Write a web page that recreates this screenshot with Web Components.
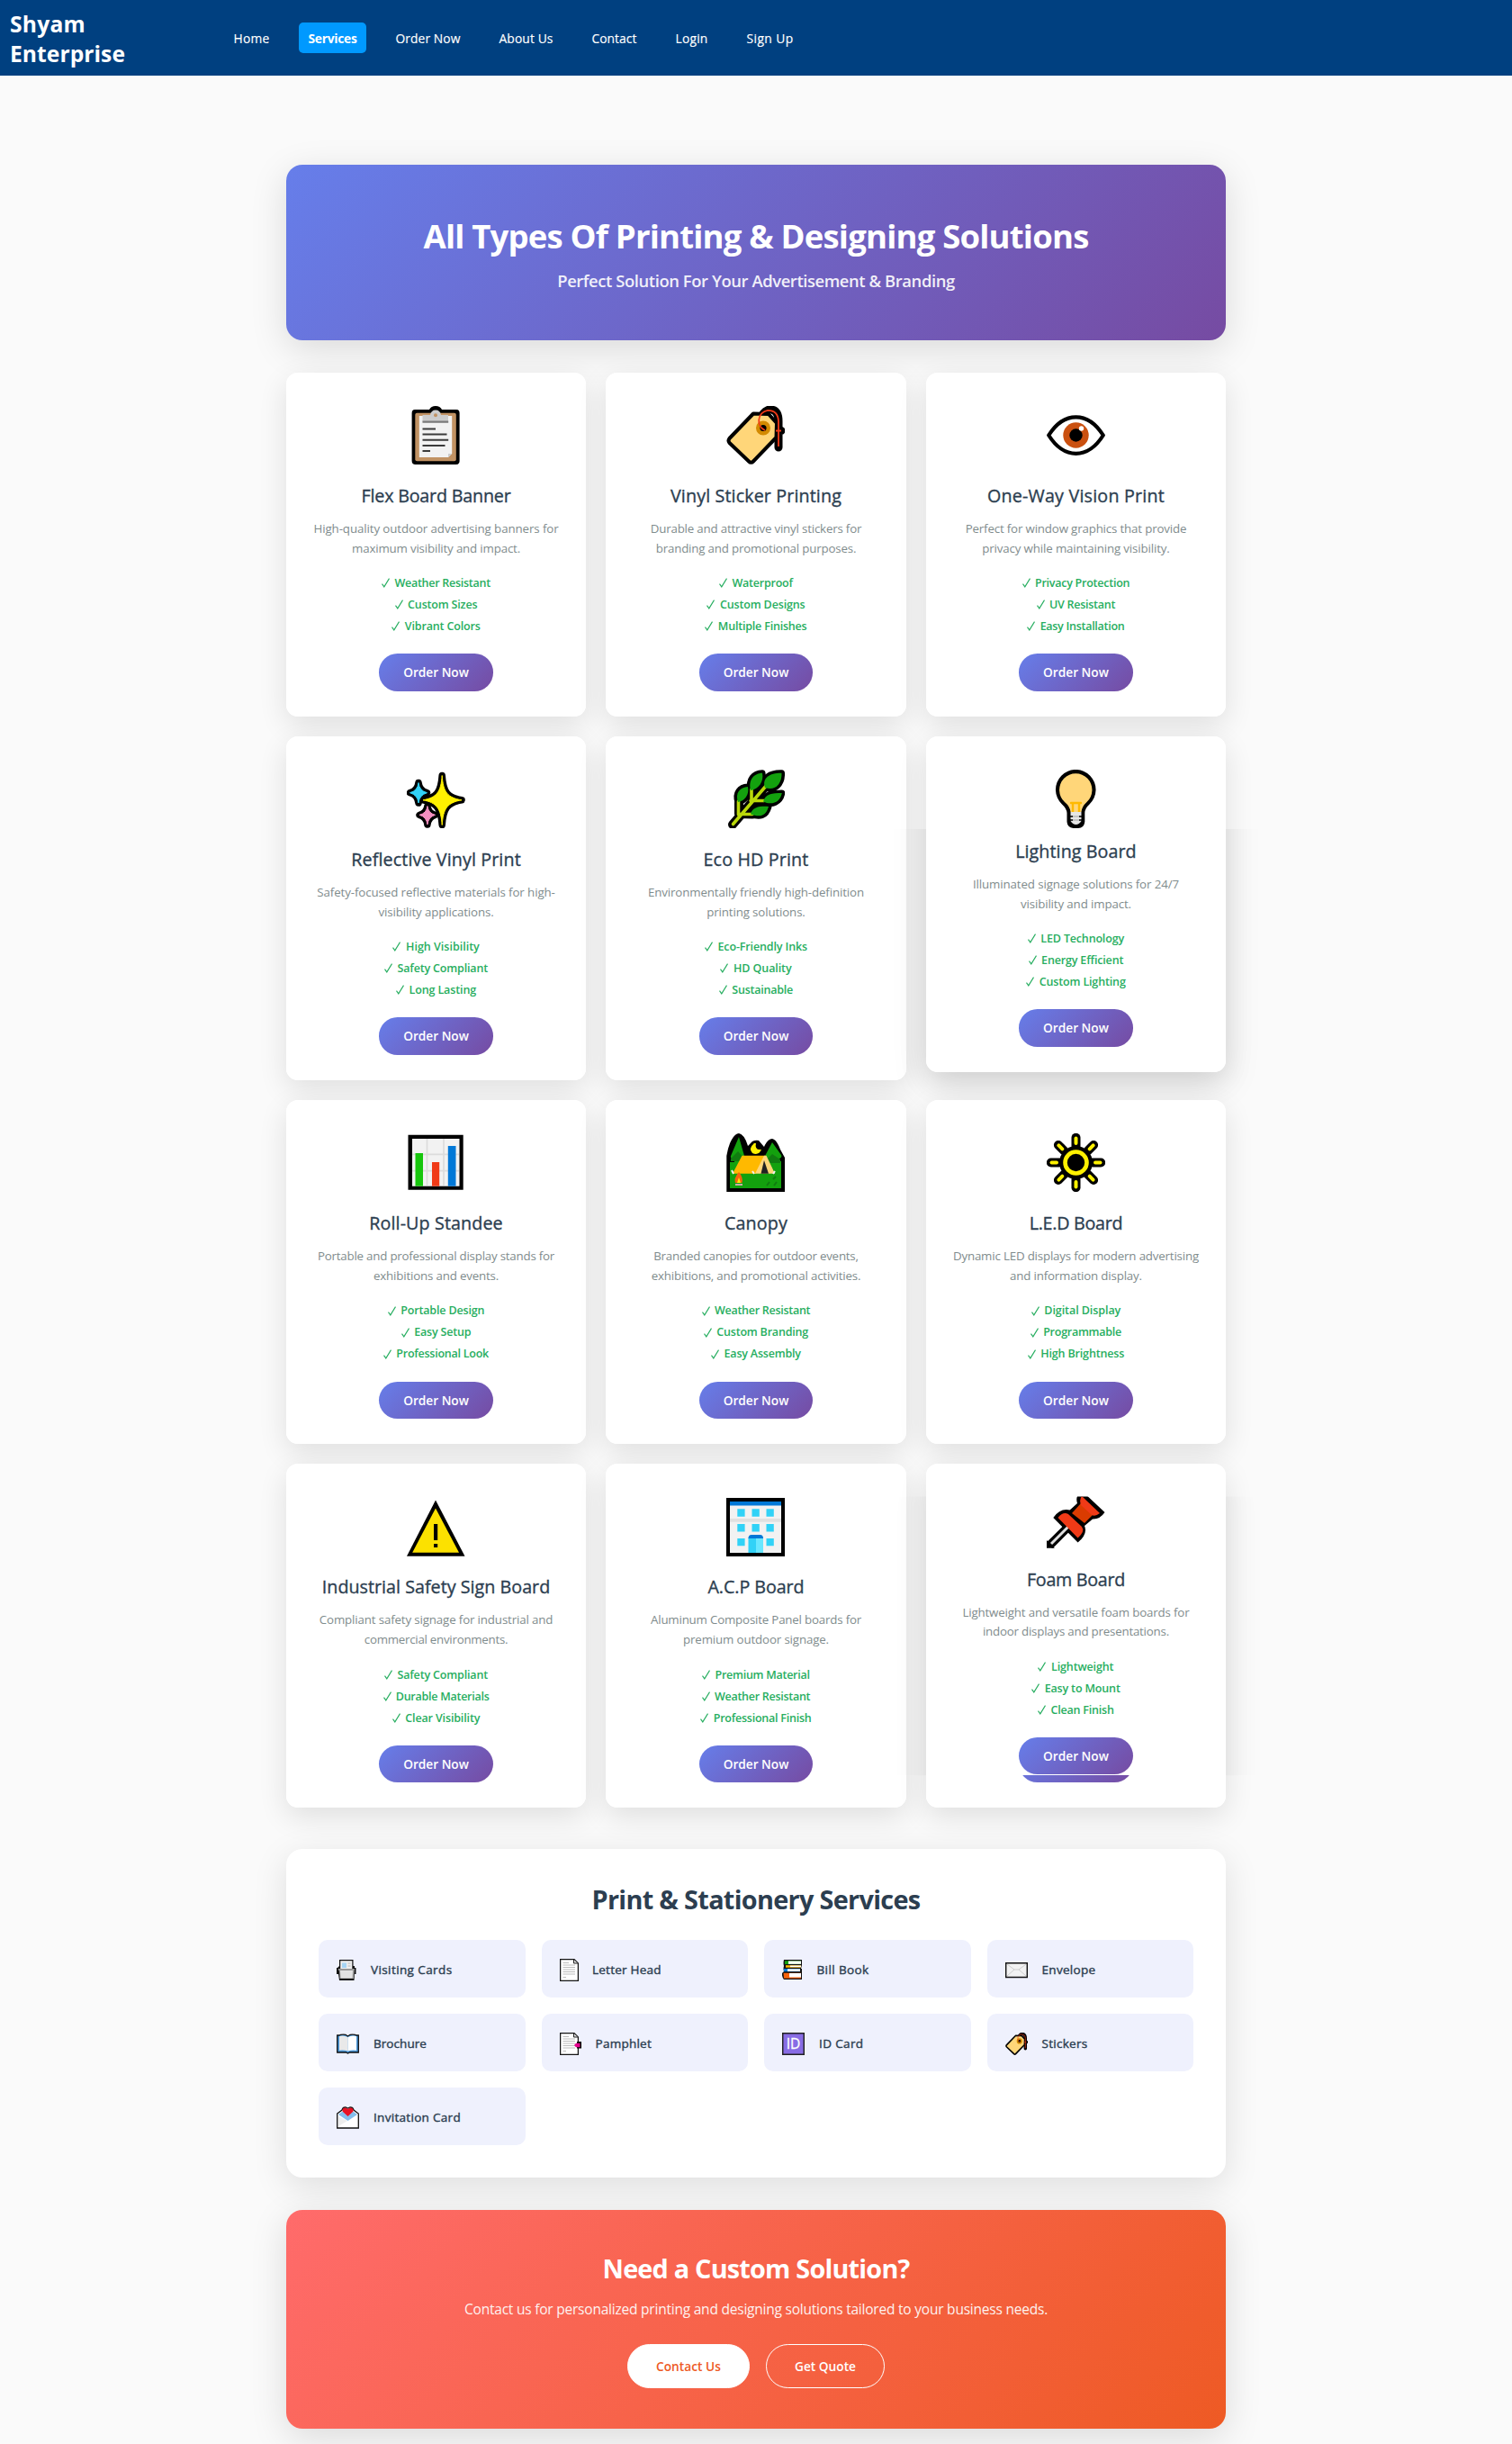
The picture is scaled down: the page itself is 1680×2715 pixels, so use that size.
<!DOCTYPE html>
<html lang="en">
<head>
<meta charset="utf-8">
<title>Shyam Enterprise - Services</title>
<style>
html, body { margin: 0; background: #fafafa; }
body { font-family: "Open Sans", "Noto Sans", sans-serif; width: 1680px; height: 2715px; overflow: hidden; }
main { width: 1044px; margin: 0 auto; padding-top: 99px; }
.cards { display: grid; grid-template-columns: repeat(3, 1fr); gap: 22.4px; margin-top: 35.9px; grid-auto-rows: 381.8px; }
</style>
</head>
<body>
<site-nav>
  <nav-link w="39">Home</nav-link><nav-link w="53" active>Services</nav-link><nav-link w="71">Order Now</nav-link><nav-link w="59">About Us</nav-link><nav-link w="49">Contact</nav-link><nav-link w="35">Login</nav-link><nav-link w="51">Sign Up</nav-link>
</site-nav>
<main>
  <hero-banner></hero-banner>
  <div class="cards" id="cards"></div>
  <stationery-panel></stationery-panel>
  <cta-banner></cta-banner>
</main>
<script>
const ICONS = {
clipboard: `<path d="M9 4H25Q27 0 32 0T39 4H55Q58.600 4 58.600 8V61Q58.600 65 54.600 65H9.600Q5.600 65 5.600 61V8Q5.600 4 9 4Z"/><rect x="9.300" y="7.800" width="45.500" height="53.400" rx="2" fill="#c19263"/><path d="M13.800 11H50.200V53L46 57H13.800Z" fill="#f2f2f2"/><path d="M46 57V53H50.200Z" fill="#ccc"/><path d="M17.500 18.500V10H26Q27 4.500 32 4.500T38 10H46V18.500Z" fill="#ccc"/><rect x="17.500" y="16.500" width="28.700" height="2.200" fill="#7a7a7a"/><circle cx="32" cy="10.200" r="2" fill="#c19263"/><path d="M17.500 25.600H32M17.500 31.600H44.500M17.500 37.700H46.200M17.500 44H42.500M17.500 50H26" stroke="#3b3b3b" stroke-width="2"/>`,
tag: `<path d="M41 24C34 9 46 3 50 4Q58 5 58 17V46M54 27.500H61" fill="none" stroke="#000" stroke-width="9" stroke-linecap="round" stroke-linejoin="round"/><path d="M30 8.500L47 9L56 19L55.500 35L30 61.500Q27.500 64 25 61.500L3.500 41Q1.500 38.500 3.500 36Z" fill="#ffd679" stroke="#000" stroke-width="4" stroke-linejoin="round"/><circle cx="41" cy="24.500" r="5.800" fill="#000" stroke="#d38a00" stroke-width="4.400"/><path d="M43 27C33 23 34 7 46 4.800Q57.500 4.800 58 17V45M55 27.500H61" fill="none" stroke="#f03a17" stroke-width="1.800"/>`,
eye: `<path d="M2.200 32.500Q15 12.300 32.500 12.300T62.800 32.500Q50 52.800 32.500 52.800T2.200 32.500Z" fill="#fff" stroke="#000" stroke-width="4.200" stroke-linejoin="round"/><circle cx="32.500" cy="32.500" r="14.200" fill="#ca5010"/><circle cx="32.500" cy="32.500" r="7.200"/><circle cx="38.500" cy="25" r="2.700" fill="#fff"/>`,
sparkles: `<defs><path id="a" d="M39.200 6.500C40.500 25 45 31 61 33.800C45 36.500 40.500 43 39.200 61.500C38 43 33 36.500 18 33.800C33 31 38 25 39.200 6.500Z"/><path id="b" d="M13 14.500Q14 23.500 22.500 25.700Q14 28 13 37Q12 28 3.500 25.700Q12 23.500 13 14.500Z"/><path id="c" d="M22.900 40.500Q24 48.500 31.500 50.300Q24 52.500 22.900 61Q22 52.500 14 50.300Q22 48.500 22.900 40.500Z"/></defs><g stroke="#000" stroke-width="7.500" stroke-linejoin="round"><use href="#a"/><use href="#b"/><use href="#c"/></g><use href="#a" fill="#fff100" stroke="#fff100" stroke-width="1"/><use href="#b" fill="#31d2f7" stroke="#31d2f7"/><use href="#c" fill="#f48fc0" stroke="#f48fc0"/>`,
leaf: `<defs><g id="l"><path d="M43 20C39 9 49 3.500 61.500 3.800C62 16 54 24 43 20Z"/><path d="M27 23C24 11 31 4 40 3.800C42 13 36 22 27 23Z"/><path d="M13 36C9.500 26 15 19.500 24 19C26 28 20 35 13 36Z"/><path d="M41 35.500C43 27 51 26 61.800 26C60 36 51 40 41 35.500Z"/><path d="M27 49.500C29 41 38 40.500 47 41C44 52 37 53 27 49.500Z"/></g></defs><g stroke="#000" stroke-width="7" stroke-linejoin="round" stroke-linecap="round"><use href="#l"/><path d="M7 61L45 17M28.500 22V34.500M14 37V49L29 49.500M29 34.500H42" fill="none" stroke-width="10"/></g><path d="M7.500 60.500L45 17M28 22V35M13.500 35V50M27 34.500H42M15 49.500H29" fill="none" stroke="#bad80a" stroke-width="3.600" stroke-linecap="round"/><use href="#l" fill="#13a10e"/>`,
bulb: `<path d="M22.500 48Q22 43 17 38.500A22.300 22.300 0 1 1 47.500 38.500Q42.500 43 42.300 48V58Q41.500 65 35 65H29.500Q23 64 22.500 58Z"/><path d="M26.500 47Q26 41 20 36A18.200 18.200 0 1 1 44.500 36Q39 41 38.500 47Z" fill="#ffd679"/><path d="M29 47V37M36 47V37M27 37H38" fill="none" stroke="#ffb900" stroke-width="2.400" stroke-linecap="round"/><path d="M26.500 47H38.500V57Q36 61 32.500 61T26.500 57Z" fill="#e6e6e6"/><path d="M28 52H37M28 56H37" stroke="#bbb" stroke-width="1.500"/><path d="M26 52H29M36 52H39M26 56H29M36 56H39" stroke="#000" stroke-width="1.300"/>`,
chart: `<path d="M1.500 1.700H62.700V62.700H1.500Z"/><path d="M6 6H58.500V58.700H6Z" fill="#f2f2f2"/><path d="M22.500 6V58M41 6V58M6 23.300H58M6 41.700H58" stroke="#dcdcdc" stroke-width="1.700"/><path d="M9.500 22H18V58.700H9.500Z" fill="#16c60c"/><path d="M28 32H36.200V58.700H28Z" fill="#f03a17"/><path d="M45.800 14H54.500V58.700H45.800Z" fill="#0078d7"/>`,
camp: `<path d="M0.300 65V25Q2 14 6 7Q10 0 14 0Q20 1 24 14L27 11Q30 7 36 8L42 15Q46 6 51 6Q56 7 60 18L65 27V65Z"/><path d="M14 4L5 25Q4 28 9 29V32H4V61H61V31H55V29Q63 28 61 24L51 10L42 27L25 29L20 25Z" fill="#13a10e"/><path d="M20 17L24 28H41L44 19Q36 26 30 22Z"/><path d="M5 28L13 20L20 28V31H5ZM44 30L51 23L60 29V33H46Z" fill="#107c10"/><path d="M31 11Q24 17 29 22Q36 25 39 18Q31 19 33 11Z" fill="#fff100"/><path d="M17.500 24.700H43.300L33 44.700H7Z" fill="#ffb900"/><path d="M42 24.700H44.500L54 44.700H32Z" fill="#ffd679"/><path d="M42 30L47 44.700H38.500Z" fill="#222"/><path d="M6 41L8 45M29 42L31 45M52 45L54 42" stroke="#eee" stroke-width="2"/><path d="M14 43Q19 49 17.500 55H10Q8 50 14 43Z" fill="#f7630c"/><path d="M14 49L16 55H12Z" fill="#fff100"/><path d="M10 57H18" stroke="#caa" stroke-width="2"/><path d="M52 51L55 48M45 58L48 54M53 58L56 54" stroke="#107c10" stroke-width="2"/>`,
sun: (() => { let b = '', y = ''; for (let i = 0; i < 8; i++) { b += `<path d="M32.500 4.800V14" transform="rotate(${i * 45} 32.500 32.500)"/>`; y += `<path d="M32.500 5.500V11" transform="rotate(${i * 45} 32.500 32.500)"/>`; } return `<g stroke="#000" stroke-width="10" stroke-linecap="round">${b}</g><circle cx="32.500" cy="32.500" r="18.500"/><g stroke="#fff100" stroke-width="4" stroke-linecap="round">${y}</g><circle cx="32.500" cy="32.500" r="12" fill="#000" stroke="#fff100" stroke-width="4.600"/>`; })(),
warning: `<path d="M32 2.500L64.500 64.700H0Z"/><path d="M32 11.500L58 60.800H6.200Z" fill="#fce100"/><path d="M30 29H34.200V47H30ZM30 51H34.200V55H30Z"/>`,
building: `<path d="M0 0H65V65H0Z"/><path d="M4 4H61V61H4Z" fill="#f2f2f2"/><path d="M4 4H61V8.500H4Z" fill="#0078d7"/><path d="M4 23H61V26.800H4Z" fill="#e0e0e0"/><path d="M12.300 12.300h8.300v8.400h-8.300ZM28.500 12.300h8.300v8.400h-8.300ZM44.500 12.300h8.300v8.400h-8.300ZM12.300 29h8.300v8.400h-8.300ZM28.500 29h8.300v8.400h-8.300ZM44.500 29h8.300v8.400h-8.300ZM12.300 45h8.300v8.200h-8.300ZM44.500 45h8.300v8.200h-8.300ZM24.500 44H33V61H24.500Z" fill="#31d2f7"/><path d="M33 44H41V61H33Z" fill="#6ae7ff"/><path d="M24.500 45Q24.500 41 28 41H37.500Q41 41 41 45Z" fill="#0078d7"/>`,
pin: `<path d="M23 42L3 62" stroke="#000" stroke-width="9.500" stroke-linecap="butt"/><path d="M0 56L9 65H0Z"/><path d="M34 15Q31 6 40 2L64.500 25Q59 33 51 32.500L42 40Q46 49 34.600 58.600L7.300 31Q15 20 25.700 22.500Z"/><path d="M25 40L5 60" stroke="#e0e0e0" stroke-width="3"/><path d="M28 26L38 15L51 28L42 37Z" fill="#da3b01"/><path d="M12.500 31Q18 24 24 27L39 41Q43 46 34.600 53.500Z" fill="#f03a17"/><path d="M39 7L59 26Q54 30 50 28L38 17Q36 11 39 7Z" fill="#f03a17"/>`,
cardindex: `<path d="M3 1H18.500V8H20V10H21.500V17H20L19.500 24H3L2 17H0V10H1L3 8Z" fill="#111"/><path d="M4.200 2.200H17.300V11H4.200Z" fill="#eee"/><path d="M6 4.500H11V10H6Z" fill="#a6d5f5"/><path d="M12.500 5H15.500M12.500 8H15.500" stroke="#ccc" stroke-width="1.500"/><path d="M1.500 11H20L19 22H3.500L3 14Z" fill="#999"/><path d="M4 13H18L17.500 21.500H4.500Z" fill="#e3e3e3"/>`,
page: `<path d="M.6.600H16L20.400 5V24.400H.6Z" fill="#fff" stroke="#161616" stroke-width="1.300"/><path d="M15.500 1V5H20" fill="#ddd" stroke="#222"/><path d="M3.500 4.500H10M3.500 7H17M3.500 9.500H17M3.500 12H17M3.500 14.500H17M3.500 17H17M3.500 20.500H7" stroke="#b5b5b5" stroke-width=".9"/>`,
books: `<path d="M2 1H22V7L21 11H22V23H2Q-.5 20 0 16L2 14Q1 11 2 8Q1 5 2 1Z" fill="#111"/><path d="M3 2.300H21V6H3Z" fill="#13a10e"/><path d="M7 2.500H21V5.800H7Z" fill="#fff"/><path d="M4 7.200H21V9.700H4Z" fill="#ffb900"/><path d="M9 7.500H21V9.200H9Z" fill="#fff"/><path d="M2 11H20V14.200H2Z" fill="#0078d7"/><path d="M6 11.200H20V14H6Z" fill="#e8f3ff"/><path d="M1.500 15.800H21V21.700H2Z" fill="#f7630c"/><path d="M8 16H21V20.500H8Z" fill="#fff"/>`,
envelope: `<path d="M.7 4.700H24.300V20.500H.7Z" fill="#f2f2f2" stroke="#111" stroke-width="1.400"/><path d="M2 6L10 12H15L23 6M2 19L10 12M15 12L23 19" fill="none" stroke="#c9c9c9" stroke-width=".9"/>`,
book: `<path d="M.7 3H3Q4 2 10 2.300L12.500 4L15 2.300Q21 2 22 3H24.300V22H14.500L12.500 23L10.500 22H.7Z" fill="#4a97d8" stroke="#111" stroke-width="1.300"/><path d="M3 4Q8 2.500 12.500 5V20.500Q8 19 3 19.800Z" fill="#e9e9e9"/><path d="M12.500 5Q17 2.500 22 4V19.800Q17 19 12.500 20.500Z" fill="#fff"/>`,
bookmark: `<path d="M.6.600H16L20.400 5V24.400H.6Z" fill="#fff" stroke="#161616" stroke-width="1.300"/><path d="M15.500 1V5H20" fill="#ddd" stroke="#222"/><path d="M3.500 4.500H10M3.500 7H17M3.500 9.500H17M3.500 12H17M3.500 14.500H17M3.500 17H17M3.500 20.500H7" stroke="#b5b5b5" stroke-width=".9"/><path d="M19 10H24V17.500H19Z"/><path d="M16 14L18 11.700H22.500V16.200H18Z" fill="#e3008c"/>`,
id: `<path d="M.7.700H24.300V24.300H.7Z" fill="#886ce4" stroke="#222" stroke-width="1.500"/><text x="12.500" y="18" text-anchor="middle" font-size="15.500" font-weight="400" fill="#fff" stroke="#fff" stroke-width=".3" font-family="Open Sans">ID</text>`,
letter: `<path d="M.7 8L6 4Q7 .7 10 1L12.500 2L15 1Q18 .7 19 4L24.300 8V24H.7Z" fill="#fff" stroke="#111" stroke-width="1.300"/><path d="M2 9L6 6H19L23 9L12.500 16Z" fill="#83beec"/><path d="M2 11L12 16L2 22Z" fill="#eee"/><path d="M12.500 11L6.500 5.500Q6 1.500 9.500 1.500Q11.500 1.500 12.500 3Q13.500 1.500 15.500 1.500Q19 1.500 18.500 5.500Z" fill="#e81123"/>`
};

/* Inline text whose tracking is adjusted to a given measure in pixels. */
class FitText extends HTMLElement {
  constructor() { super(); this.attachShadow({ mode: 'open' }).innerHTML = `<style>:host{display:inline-block;white-space:pre}</style><slot></slot>`; }
  connectedCallback() { queueMicrotask(() => this.fit()); }
  fit() {
    const target = parseFloat(this.getAttribute('w'));
    if (!target) return;
    this.style.letterSpacing = '0px';
    const n = this.textContent.length, nat = this.getBoundingClientRect().width;
    this.style.letterSpacing = ((target + 1 - nat) / n).toFixed(3) + 'px';
  }
}
class UiIcon extends HTMLElement {
  connectedCallback() {
    const s = this.getAttribute('size') || 65, box = this.getAttribute('box') || 65;
    this.attachShadow({ mode: 'open' }).innerHTML = `<style>:host{display:block;width:${s}px;height:${s}px;flex:none}svg{display:block;overflow:hidden}</style><svg width="${s}" height="${s}" viewBox="0 0 ${box} ${box}">${ICONS[this.getAttribute('name')]}</svg>`;
  }
}
class NavLink extends HTMLElement {
  connectedCallback() {
    this.attachShadow({ mode: 'open' }).innerHTML = `<style>:host{display:block;box-sizing:border-box;height:34px;line-height:35.500px;border-radius:5px;color:#fff;font-size:13.800px;font-weight:400;-webkit-text-stroke:.15px currentColor;text-align:center;width:${+this.getAttribute('w') + 22}px;white-space:nowrap}:host([active]){background:#0099ff;font-weight:700;-webkit-text-stroke:0}</style><fit-text w="${this.getAttribute('w')}">${this.textContent}</fit-text>`;
  }
}
class SiteNav extends HTMLElement {
  connectedCallback() {
    this.attachShadow({ mode: 'open' }).innerHTML = `<style>:host{display:flex;align-items:center;height:84px;background:#004080;box-sizing:border-box;padding-left:11px}
    .logo{width:238px;color:#fff;font-weight:700;font-size:24.600px;line-height:33.300px;padding-top:2px}.logo fit-text{display:table}nav{display:flex;gap:22px}</style>
    <div class="logo"><fit-text w="83">Shyam</fit-text><fit-text w="127">Enterprise</fit-text></div><nav><slot></slot></nav>`;
  }
}
class HeroBanner extends HTMLElement {
  connectedCallback() {
    this.attachShadow({ mode: 'open' }).innerHTML = `<style>:host{display:block;box-sizing:border-box;height:195px;padding-top:55.200px;text-align:center;color:#fff;border-radius:18px;background:linear-gradient(135deg,#667eea,#764ba2);box-shadow:0 10px 40px rgba(0,0,0,.13)}
    h1{margin:0;font-size:36.500px;line-height:48px;font-weight:700}p{margin:12.800px 0 0;font-size:18.400px;line-height:26px;font-weight:600;opacity:.9}</style>
    <h1><fit-text w="738">All Types Of Printing &amp; Designing Solutions</fit-text></h1><p><fit-text w="440.500">Perfect Solution For Your Advertisement &amp; Branding</fit-text></p>`;
  }
}
class OrderButton extends HTMLElement {
  connectedCallback() {
    this.attachShadow({ mode: 'open' }).innerHTML = `<style>:host{display:block;width:126.200px;height:41.400px;border-radius:20.700px;line-height:42.400px;text-align:center;color:#fff;font-size:13.700px;font-weight:600;background:linear-gradient(135deg,#667eea,#764ba2)}</style><slot></slot>`;
  }
}
class ServiceCard extends HTMLElement {
  set data(d) {
    const line = ([t, w]) => `<div><fit-text w="${w}">${t}</fit-text></div>`;
    const check = `<span class="ck">✓<svg width="9" height="11" viewBox="0 0 9 11"><path d="M.500 6.600L2.800 9.900L8.500.600" fill="none" stroke="#27ae60" stroke-width="1.100"/></svg></span>`;
    this.attachShadow({ mode: 'open' }).innerHTML = `<style>
    :host{display:block;position:relative;box-sizing:border-box;height:381.800px;border-radius:13px;background:#fff;box-shadow:0 10px 32px rgba(0,0,0,.11);text-align:center}
    .glow{position:absolute;inset:0;border-radius:13px;box-shadow:0 14px 44px rgba(0,0,0,.09)}
    .face{position:relative;height:100%;box-sizing:border-box;border-radius:13px;background:#fff;padding-top:37.200px;display:flex;flex-direction:column;align-items:center}
    h3{margin:20.700px 0 0;font-size:19.700px;line-height:28px;font-weight:400;-webkit-text-stroke:.35px currentColor;color:#2c3e50}
    .desc{margin-top:12.100px;font-size:13.300px;line-height:21.800px;color:#7f8c8d}
    .feat{margin-top:15.500px;font-size:12.500px;line-height:24px;font-weight:600;color:#27ae60}
    .ck{position:relative;color:transparent;margin-right:.5px}
    .ck svg{position:absolute;left:0;top:3.300px}
    order-button{margin-top:18.200px}
    :host([state=light]){height:372.800px}
    :host([state=light]) h3{margin-top:11.700px}
    :host([state=light]) .glow{clip-path:inset(103px -70px -70px -70px)}
    :host([state=foam]) .glow{box-shadow:0 10px 44px rgba(0,0,0,.06);clip-path:inset(36px -70px 36px -70px)}
    :host([state=foam]) .face{padding-top:28.400px}
    :host([state=foam]) ui-icon{clip-path:inset(7.600px 0 0 0)}
    .edge{position:absolute;left:103.400px;bottom:27.800px;height:8px;overflow:hidden;display:flex;align-items:flex-end}
    .edge order-button{margin:0}
    </style>
    ${d.state ? '<div class="glow"></div>' : ''}
    <div class="face"><ui-icon name="${d.icon}"></ui-icon><h3>${line(d.title)}</h3><div class="desc">${d.desc.map(line).join('')}</div>
    <div class="feat">${d.feat.map(([t, w]) => `<div><fit-text w="${w}">${check} ${t}</fit-text></div>`).join('')}</div><order-button><fit-text w="71.700">Order Now</fit-text></order-button></div>
    ${d.state === 'foam' ? '<div class="edge"><order-button></order-button></div>' : ''}`;
    if (d.state) this.setAttribute('state', d.state);
  }
}
class StationeryItem extends HTMLElement {
  connectedCallback() {
    const g = n => this.getAttribute(n);
    this.attachShadow({ mode: 'open' }).innerHTML = `<style>:host{display:flex;align-items:center;height:64px;border-radius:10px;background:#eff1fd;padding-left:20px;box-sizing:border-box;color:#2c3e50;font-size:13.500px;font-weight:400;-webkit-text-stroke:.4px currentColor}
    .i{width:${g('lead')}px;flex:none;padding-top:2px;-webkit-text-stroke:0}fit-text{padding-top:1px}</style><div class="i"><ui-icon name="${g('icon')}" size="25" box="${g('box') || 25}"></ui-icon></div><fit-text w="${g('w')}">${this.textContent}</fit-text>`;
  }
}
class StationeryPanel extends HTMLElement {
  connectedCallback() {
    const items = [['cardindex', 'Visiting Cards', 89.5, 38], ['page', 'Letter Head', 75.8, 36.5], ['books', 'Bill Book', 57, 38.5], ['envelope', 'Envelope', 59, 41], ['book', 'Brochure', 58, 41], ['bookmark', 'Pamphlet', 61.5, 40], ['id', 'ID Card', 48.5, 41], ['tag', 'Stickers', 50, 41], ['letter', 'Invitation Card', 96, 41]];
    this.attachShadow({ mode: 'open' }).innerHTML = `<style>:host{display:block;box-sizing:border-box;height:365px;margin-top:46.100px;padding:35.900px 36px;border-radius:18px;background:#fff;box-shadow:0 10px 38px rgba(0,0,0,.115)}
    h2{margin:0;text-align:center;font-size:28.800px;line-height:40px;font-weight:700;color:#2c3e50}.grid{margin-top:25.100px;display:grid;grid-template-columns:repeat(4,1fr);gap:18px}</style>
    <h2><fit-text w="364">Print &amp; Stationery Services</fit-text></h2><div class="grid">${items.map(([i, t, w, l]) => `<stationery-item icon="${i}" w="${w}" lead="${l}" ${i === 'tag' ? 'box="65"' : ''}>${t}</stationery-item>`).join('')}</div>`;
  }
}
class CtaBanner extends HTMLElement {
  connectedCallback() {
    this.attachShadow({ mode: 'open' }).innerHTML = `<style>:host{display:block;box-sizing:border-box;height:242.700px;margin-top:36px;padding-top:44.700px;text-align:center;color:#fff;border-radius:18px;background:linear-gradient(135deg,#ff6b6b,#ee5a24);box-shadow:0 10px 40px rgba(0,0,0,.13)}
    h2{margin:0;font-size:28.800px;line-height:40px;font-weight:700}p{margin:12.200px 0 0;font-size:15.500px;line-height:26px;opacity:.92}
    .row{display:flex;justify-content:center;gap:18px;margin-top:26.100px}.b{box-sizing:border-box;height:49px;line-height:48px;border:1px solid #fff;border-radius:24.500px;font-size:13.700px;font-weight:600}
    .p{width:136px;background:#fff;color:#ee5a24}.s{width:132px}</style>
    <h2><fit-text w="340">Need a Custom Solution?</fit-text></h2><p><fit-text w="647">Contact us for personalized printing and designing solutions tailored to your business needs.</fit-text></p>
    <div class="row"><div class="b p"><fit-text w="71">Contact Us</fit-text></div><div class="b s"><fit-text w="67">Get Quote</fit-text></div></div>`;
  }
}
for (const [n, c] of [['fit-text', FitText], ['ui-icon', UiIcon], ['nav-link', NavLink], ['site-nav', SiteNav], ['hero-banner', HeroBanner], ['order-button', OrderButton], ['service-card', ServiceCard], ['stationery-item', StationeryItem], ['stationery-panel', StationeryPanel], ['cta-banner', CtaBanner]]) customElements.define(n, c);

const services = [
{ icon: 'clipboard', title: ['Flex Board Banner', 165], desc: [['High-quality outdoor advertising banners for', 271], ['maximum visibility and impact.', 186]], feat: [['Weather Resistant', 119.6], ['Custom Sizes', 90.6], ['Vibrant Colors', 97.4]] },
{ icon: 'tag', title: ['Vinyl Sticker Printing', 189], desc: [['Durable and attractive vinyl stickers for', 233.5], ['branding and promotional purposes.', 221.5]], feat: [['Waterproof', 80.6], ['Custom Designs', 108], ['Multiple Finishes', 112]] },
{ icon: 'eye', title: ['One-Way Vision Print', 196], desc: [['Perfect for window graphics that provide', 244.5], ['privacy while maintaining visibility.', 207.5]], feat: [['Privacy Protection', 118.5], ['UV Resistant', 86.5], ['Easy Installation', 107]] },
{ icon: 'sparkles', title: ['Reflective Vinyl Print', 187.5], desc: [['Safety-focused reflective materials for high-', 263.5], ['visibility applications.', 127]], feat: [['High Visibility', 95.5], ['Safety Compliant', 114], ['Long Lasting', 88]] },
{ icon: 'leaf', title: ['Eco HD Print', 116], desc: [['Environmentally friendly high-definition', 239], ['printing solutions.', 108.5]], feat: [['Eco-Friendly Inks', 113], ['HD Quality', 78], ['Sustainable', 81]] },
{ icon: 'bulb', state: 'light', title: ['Lighting Board', 133.5], desc: [['Illuminated signage solutions for 24/7', 228], ['visibility and impact.', 122]], feat: [['LED Technology', 106], ['Energy Efficient', 104.5], ['Custom Lighting', 109.5]] },
{ icon: 'chart', title: ['Roll-Up Standee', 147.5], desc: [['Portable and professional display stands for', 262], ['exhibitions and events.', 138]], feat: [['Portable Design', 106.5], ['Easy Setup', 76.5], ['Professional Look', 116]] },
{ icon: 'camp', title: ['Canopy', 69], desc: [['Branded canopies for outdoor events,', 226.5], ['exhibitions, and promotional activities.', 231.5]], feat: [['Weather Resistant', 119.5], ['Custom Branding', 115], ['Easy Assembly', 98.5]] },
{ icon: 'sun', title: ['L.E.D Board', 102.5], desc: [['Dynamic LED displays for modern advertising', 272], ['and information display.', 146]], feat: [['Digital Display', 98.5], ['Programmable', 100], ['High Brightness', 106.5]] },
{ icon: 'warning', title: ['Industrial Safety Sign Board', 252.5], desc: [['Compliant safety signage for industrial and', 258.5], ['commercial environments.', 158.5]], feat: [['Safety Compliant', 114], ['Durable Materials', 117], ['Clear Visibility', 96.5]] },
{ icon: 'building', title: ['A.C.P Board', 106], desc: [['Aluminum Composite Panel boards for', 233], ['premium outdoor signage.', 161]], feat: [['Premium Material', 118.5], ['Weather Resistant', 119.5], ['Professional Finish', 122]] },
{ icon: 'pin', state: 'foam', title: ['Foam Board', 108], desc: [['Lightweight and versatile foam boards for', 251], ['indoor displays and presentations.', 206]], feat: [['Lightweight', 83], ['Easy to Mount', 97.5], ['Clean Finish', 83.5]] }
];
const grid = document.getElementById('cards');
for (const s of services) { const el = document.createElement('service-card'); el.data = s; grid.append(el); }
</script>
</body>
</html>
